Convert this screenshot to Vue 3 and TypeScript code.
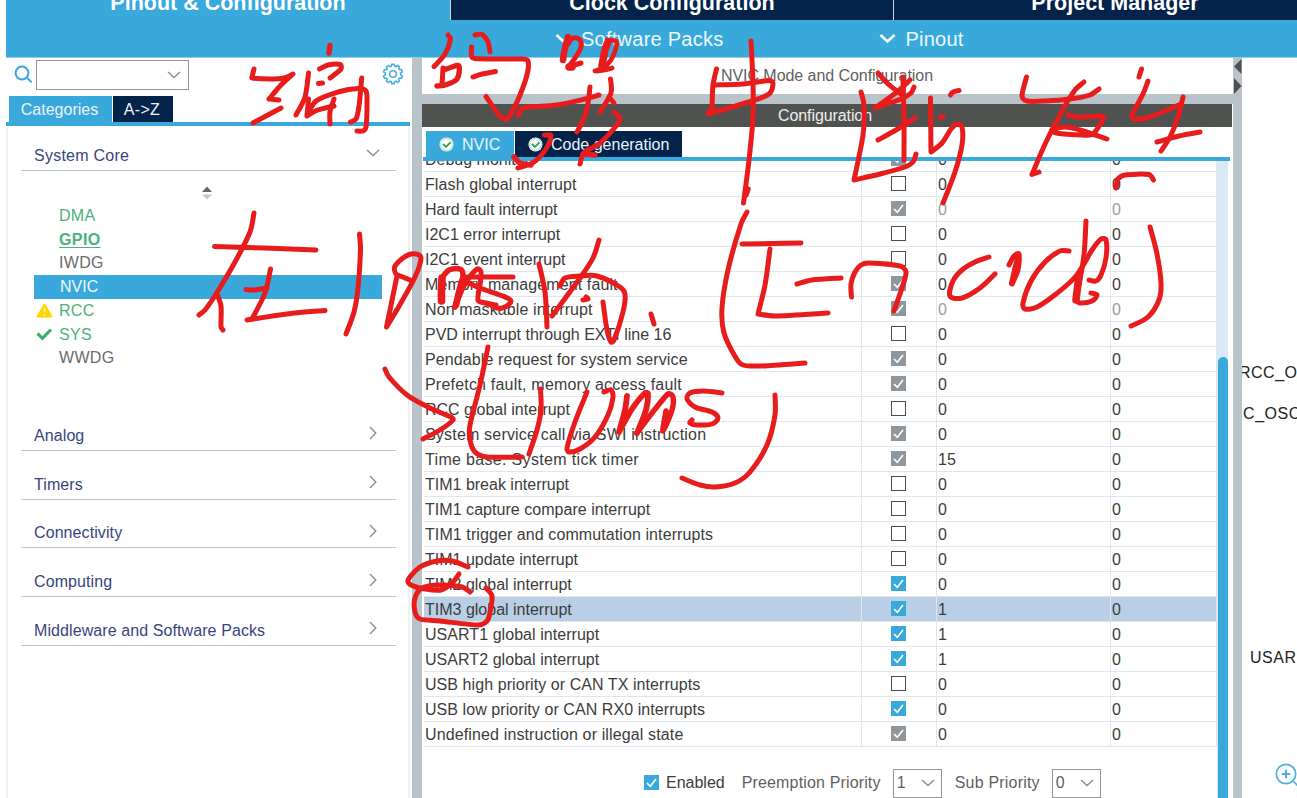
<script setup lang="ts">
type CheckState = 'off' | 'on' | 'locked'

interface Interrupt {
  name: string
  state: CheckState
  preempt: number
  sub: number
  spacing?: number
  dim?: boolean
  selected?: boolean
}

interface Peripheral {
  name: string
  kind: 'ok' | 'bold' | 'plain' | 'active'
  icon?: 'warn' | 'check'
}

interface Stroke {
  pts: string
  w?: number
}

const row = (name: string, state: CheckState, preempt = 0, extra: Partial<Interrupt> = {}): Interrupt => ({
  name,
  state,
  preempt,
  sub: 0,
  ...extra,
})

const interrupts: Interrupt[] = [
  row('Debug monitor', 'locked'),
  row('Flash global interrupt', 'off', 0, { spacing: 0.1 }),
  row('Hard fault interrupt', 'locked', 0, { dim: true }),
  row('I2C1 error interrupt', 'off'),
  row('I2C1 event interrupt', 'off'),
  row('Memory management fault', 'locked', 0, { spacing: 0.1 }),
  row('Non maskable interrupt', 'locked', 0, { dim: true, spacing: 0.1 }),
  row('PVD interrupt through EXTI line 16', 'off'),
  row('Pendable request for system service', 'locked', 0, { spacing: 0.11 }),
  row('Prefetch fault, memory access fault', 'locked', 0, { spacing: 0.2 }),
  row('RCC global interrupt', 'off'),
  row('System service call via SWI instruction', 'locked', 0, { spacing: 0.19 }),
  row('Time base: System tick timer', 'locked', 15, { spacing: 0.33 }),
  row('TIM1 break interrupt', 'off'),
  row('TIM1 capture compare interrupt', 'off', 0, { spacing: 0.04 }),
  row('TIM1 trigger and commutation interrupts', 'off', 0, { spacing: 0.09 }),
  row('TIM1 update interrupt', 'off'),
  row('TIM2 global interrupt', 'on'),
  row('TIM3 global interrupt', 'on', 1, { selected: true }),
  row('USART1 global interrupt', 'on', 1, { spacing: 0.05 }),
  row('USART2 global interrupt', 'on', 1, { spacing: 0.05 }),
  row('USB high priority or CAN TX interrupts', 'off', 0, { spacing: 0.07 }),
  row('USB low priority or CAN RX0 interrupts', 'on', 0, { spacing: 0.07 }),
  row('Undefined instruction or illegal state', 'locked', 0, { spacing: 0.13 }),
]

const peripherals: Peripheral[] = [
  { name: 'DMA', kind: 'ok' },
  { name: 'GPIO', kind: 'bold' },
  { name: 'IWDG', kind: 'plain' },
  { name: 'NVIC', kind: 'active' },
  { name: 'RCC', kind: 'ok', icon: 'warn' },
  { name: 'SYS', kind: 'ok', icon: 'check' },
  { name: 'WWDG', kind: 'plain' },
]

const categories: string[] = ['Analog', 'Timers', 'Connectivity', 'Computing', 'Middleware and Software Packs']

// Pen annotations; a repeated point makes a sharp corner.
const strokes: Stroke[] = [
  { pts: '254,69 252,77 252,78 270,79 284,78 293,74 293,74 281,85 269,99 269,99 279,100' },
  { pts: '281,108 266,116 253,123' },
  { pts: '308.5,73 305,97 296,115' },
  { pts: '330,45.5 329,53', w: 5.4 },
  { pts: '319.5,69 328,65 340,64.5 341,69 330,78' },
  { pts: '318.5,83.5 322.5,83' },
  { pts: '308.5,99 307,116 307,116 316,101 338,92 358,88.5 366,91 367,103 366,127 363,131 357,131' },
  { pts: '308,115 318,110 334,106' },
  { pts: '334,99 330,112 330,124' },
  { pts: '361.7,78 359,106 356,119 350.5,122' },
  { pts: '448,35 450.5,39 445,54 434,66.5' },
  { pts: '443,68 442,85' },
  { pts: '444,70 452,67 459,66 457,79 445,85 437,86', w: 5.4 },
  { pts: '475,35 482,34.5 488,42 490,52' },
  { pts: '471.5,47 471.5,56 475,58.5 500,59 523,59 528,61 527,75 517,102 508,118 504,119 498,114 486,96.5' },
  { pts: '473,77 482,74 495.5,71.5' },
  { pts: '518,115.5 523,108 557,105 585,99 599,95' },
  { pts: '590,87 588,103 584,118 577,132' },
  { pts: '568,37 565,48 563,60', w: 6.5 },
  { pts: '568,44 573,38 580,40 581,47 577,55 570,65' },
  { pts: '569,67 572,67', w: 7.5 },
  { pts: '571,66 581,63' },
  { pts: '608,42 605,50 602,66', w: 7.5 },
  { pts: '607,40 616,41 616,48 611,60 603,68 595,71 605,70 612,68', w: 4.8 },
  { pts: '610.5,79 611,93 600,112' },
  { pts: '609,97 614,103' },
  { pts: '614,112.5 620,118 616,126 600,143 584,153 580,164' },
  { pts: '583,154 595,155', w: 5.5 },
  { pts: '544.5,135 551,136 546,149 534,162 518,168' },
  { pts: '514,157 520,163 531,165', w: 5.6 },
  { pts: '751,41 753,83 753,117 749,160 743.5,203' },
  { pts: '748,189 746,195', w: 5.5 },
  { pts: '716.5,69 713,85 712,108' },
  { pts: '715,85 743,84 770,80.5 773,84 769,94 752,101 708,114 708,114 713,107' },
  { pts: '861,92 864,105 863,135 854,180 854,180 880,174 905,167 913,162 916,154' },
  { pts: '878,73 887,83 902,95' },
  { pts: '910,80 897,92 875,108 875,108 901,99 911,93 914,87' },
  { pts: '903,77 904,120 904,160' },
  { pts: '878,140 896,130 915,118' },
  { pts: '930.5,98 931,152 931,152 942,143 951,129 957,124 962,127 962,145 955,172 943,203' },
  { pts: '940.5,117 943,117' },
  { pts: '950.5,95 953,92 959,90.5' },
  { pts: '1026.5,77 1022,96 1027,101 1045,101 1070,99 1090,95 1099,89' },
  { pts: '1084,82 1075,90 1062,111 1046,142 1032,174.5 1032,174.5 1039,172' },
  { pts: '1068,115 1078,117 1103,116 1103,119 1093,134 1082,135 1056,133 1052,130 1065,127 1080,130 1107,139' },
  { pts: '1141.5,69 1139,77' },
  { pts: '1148,81 1143,94 1132,115 1134,119 1150,117 1181,104' },
  { pts: '1183,97 1178,117 1170,137 1161,151' },
  { pts: '1157,142 1179,136 1200,132' },
  { pts: '1116,188 1118,179 1125,175 1149,174.5 1153.5,180' },
  { pts: '254,213 250,232 235,262 216,294 205,310 199,315' },
  { pts: '214.5,246.5 265,248 316,250' },
  { pts: '217,294 221,306 221,327 223,330' },
  { pts: '270.5,269 265,293 252,319' },
  { pts: '246,289.5 254,290 267,288' },
  { pts: '247,320 287,314 325,310.5' },
  { pts: '359.5,234 360.5,250 358,288 354,312 346,334' },
  { pts: '397,276 386.5,327 386.5,327 398,308 415,277 421,258 416,254 406,256 395,266 396,274 403,277 410,280' },
  { pts: '442,278 441.5,290 441.5,301', w: 7.6 },
  { pts: '442,278 449,270 460,269 463,275 460,290 455,307', w: 5.5 },
  { pts: '462,281 459,292 456,305', w: 6.6 },
  { pts: '455,307 465,284 477,269 481,272 480,284 478,300 485,303 496,305' },
  { pts: '466,277 513,277' },
  { pts: '465,281 480,288 503,296 511,301 505,307 497,308 487,303' },
  { pts: '539,264 545,292 547,327' },
  { pts: '599,240 593,258 580,278 552,316' },
  { pts: '560,286 565,278 580,276 597,276 620,287 625,294 623,312 614,340 611,342 607,330 603,302' },
  { pts: '586,297 588,299 583,300' },
  { pts: '651,314 654,324' },
  { pts: '747,212 741,224 728,270 722,308 724,333 736,358 743,365 760,366 805,363' },
  { pts: '742,244 801,243' },
  { pts: '770,249 765,285 758,314 758,314 775,316 828,313' },
  { pts: '797,284 812,280 841,278' },
  { pts: '851.5,297 851,284 855,272 861,265 869,263 900,266 906,272 903,285 894,311' },
  { pts: '989,257 975,262 962,270 953,281 950,296 962,298 980,288 995,274' },
  { pts: '1009,265 1014,256 1019,254 1018,270 1012,284' },
  { pts: '1018,258 1015,270 1012,283', w: 6 },
  { pts: '1069,251 1060,251 1045,262 1031,281 1023,303 1025,309 1037,307 1056,294 1076,276 1092,250 1101,239 1106,240 1106,258 1101,275 1096,281 1089,280' },
  { pts: '1086,221 1084,255 1079,285' },
  { pts: '1079,275 1076,300', w: 7.5 },
  { pts: '1076,300 1080,303 1092,301 1097,295 1091,293' },
  { pts: '1150,227 1157,254 1161,283 1159,300 1148,317 1131,326' },
  { pts: '385,369 389,377 407,395 430,408 451,417 453,420 440,430 423,439' },
  { pts: '488,347 480,385 470,425 470,440 475,452 487,457 522,457' },
  { pts: '540.5,389 541,410 537,430 529,454' },
  { pts: '587,392 575,422 567,448 569,452 580,449 595,437 608,415 613,397 611,390 604,392' },
  { pts: '627,396 625,410 619,432 619,432 632,409 645,393 648,394 646,410 637,433', w: 5.8 },
  { pts: '637,433 652,413 668,394 673,397 672,410 663,431 666,411', w: 5.4 },
  { pts: '722,393 703,391 690,393 687,399 695,407 712,412 718,418 712,424 697,425 690,423 692,420' },
  { pts: '775,395 775,415 767,445 750,472 735,483 715,487 700,485 682,478' },
  { pts: '468,567 452,561 437,561 420,567 408,580 411,585 425,589 441,590 452,583 459,574' },
  { pts: '470,592 462,587 440,585 422,588 415,598 415,612 420,619 440,621 478,625 487,621 490,612 492,596 486,588' },
]

// Catmull-Rom spline through the points, written as cubic segments.
function smooth(pts: string): string {
  const p = pts.split(' ').map((s) => s.split(',').map(Number))
  const at = (i: number) => p[Math.max(0, Math.min(p.length - 1, i))]
  let d = `M${p[0][0]} ${p[0][1]}`
  for (let i = 0; i < p.length - 1; i++) {
    const [a, b, c, e] = [at(i - 1), at(i), at(i + 1), at(i + 2)]
    const seg = Math.hypot(c[0] - b[0], c[1] - b[1])
    const limit = (x: number, y: number) => {
      const l = Math.hypot(x, y)
      const k = l > seg / 3 ? seg / 3 / l : 1
      return [x * k, y * k]
    }
    const u = limit((c[0] - a[0]) / 6, (c[1] - a[1]) / 6)
    const v = limit((e[0] - b[0]) / 6, (e[1] - b[1]) / 6)
    d += `C${b[0] + u[0]} ${b[1] + u[1]} ${c[0] - v[0]} ${c[1] - v[1]} ${c[0]} ${c[1]}`
  }
  return d
}
</script>

<template>
  <div class="app">
    <header class="main-tabs">
      <div class="main-tab current">Pinout &amp; Configuration</div>
      <div class="main-tab">Clock Configuration</div>
      <div class="main-tab">Project Manager</div>
    </header>
    <nav class="menu">
      <div class="menu-item packs">
        <svg width="17" height="11" viewBox="0 0 17 11"><path d="M1.5 2 8.5 8.5 15.5 2" /></svg>
        <span>Software Packs</span>
      </div>
      <div class="menu-item">
        <svg width="17" height="11" viewBox="0 0 17 11"><path d="M1.5 2 8.5 8.5 15.5 2" /></svg>
        <span>Pinout</span>
      </div>
    </nav>

    <div class="body">
      <aside class="sidebar">
        <div class="search">
          <svg class="lens" width="19" height="19" viewBox="0 0 19 19">
            <circle cx="8" cy="8" r="6.4" /><path d="M12.8 12.8 17.6 17.2" />
          </svg>
          <div class="combo">
            <svg class="chev" width="14" height="8" viewBox="0 0 14 8"><path d="M1 1 7 6.6 13 1" /></svg>
          </div>
          <svg class="gear" width="22" height="22" viewBox="0 0 22 22">
            <circle cx="11" cy="11" r="3.3" />
            <path
              d="M9.3 3.3 9.8 1.4h2.4l.5 1.9 1.3.4 1.5-1.4 2 1.4-.7 1.9.8 1 2-.1.8 2.3-1.7 1.1v1.9l1.7 1.2-.8 2.2-2-.1-.9 1.1.7 1.9-2 1.4-1.5-1.3-1.3.4-.5 2H9.8l-.5-2-1.3-.4-1.5 1.3-2-1.4.7-1.9-.8-1.1-2 .1-.8-2.2 1.7-1.2V10L1.6 8.9l.8-2.3 2 .1.8-1-.7-1.9 2-1.4L8 3.7z"
            />
          </svg>
        </div>
        <div class="side-tabs">
          <div class="side-tab on">Categories</div>
          <div class="side-tab">A-&gt;Z</div>
        </div>
        <div class="tree">
          <div class="category open">
            <span>System Core</span>
            <svg class="chev" width="14" height="8" viewBox="0 0 14 8"><path d="M1 1 7 6.6 13 1" /></svg>
          </div>
          <svg class="sorter" width="10" height="14" viewBox="0 0 10 14">
            <path d="M0 6 5 .5 10 6z" fill="#666" /><path d="M0 8.5H10L5 13.5z" fill="#c9c9c9" />
          </svg>
          <ul class="peripherals">
            <li v-for="p in peripherals" :key="p.name" :class="p.kind">
              <span class="mark">
                <svg v-if="p.icon === 'warn'" width="17" height="15" viewBox="0 0 17 15">
                  <path d="M8.5 1.5 15.5 13.5H1.5z" fill="#ffd400" stroke="#ffd400" stroke-width="1.8" stroke-linejoin="round" />
                  <path d="M8.5 5v4.5M8.5 11v1.7" stroke="#fff3b0" stroke-width="1.5" />
                </svg>
                <svg v-else-if="p.icon === 'check'" width="17" height="13" viewBox="0 0 17 13">
                  <path d="M1.5 5.5 6.5 10.3 15 1.5" fill="none" stroke="#3fae6b" stroke-width="3.2" />
                </svg>
              </span>
              <span>{{ p.name }}</span>
            </li>
          </ul>
          <div v-for="c in categories" :key="c" class="category">
            <span>{{ c }}</span>
            <svg class="chev" width="8" height="14" viewBox="0 0 8 14"><path d="M1 1 6.8 7 1 13" /></svg>
          </div>
        </div>
      </aside>

      <main class="center">
        <div class="mode-title">NVIC Mode and Configuration</div>
        <div class="config-title">Configuration</div>
        <div class="nvic-tabs">
          <div class="nvic-tab on">
            <svg width="15" height="15" viewBox="0 0 15 15">
              <circle cx="7.5" cy="7.5" r="7" fill="#fff" /><circle cx="7.5" cy="7.5" r="5.8" fill="none" stroke="#a6d9b8" />
              <path d="M4 7 7 9.9 11.5 5.3" fill="none" stroke="#3a9d60" stroke-width="1.9" />
            </svg>
            <span>NVIC</span>
          </div>
          <div class="nvic-tab code">
            <svg width="15" height="15" viewBox="0 0 15 15">
              <circle cx="7.5" cy="7.5" r="7" fill="#fff" /><circle cx="7.5" cy="7.5" r="5.8" fill="none" stroke="#a6d9b8" />
              <path d="M4 7 7 9.9 11.5 5.3" fill="none" stroke="#3a9d60" stroke-width="1.9" />
            </svg>
            <span>Code generation</span>
          </div>
        </div>
        <div class="scroller">
          <div class="table">
            <div v-for="r in interrupts" :key="r.name" class="row" :class="{ selected: r.selected, dim: r.dim }">
              <div class="cell name" :style="{ letterSpacing: `${r.spacing ?? 0}px` }">{{ r.name }}</div>
              <div class="cell tick">
                <span class="box" :class="r.state">
                  <svg v-if="r.state !== 'off'" width="15" height="15" viewBox="0 0 15 15"><path d="M3 8 6.3 11.2 12 4" /></svg>
                </span>
              </div>
              <div class="cell num">{{ r.preempt }}</div>
              <div class="cell num last">{{ r.sub }}</div>
            </div>
          </div>
          <div class="track"><div class="thumb"></div></div>
        </div>
        <div class="editor">
          <span class="box on"><svg width="15" height="15" viewBox="0 0 15 15"><path d="M3 8 6.3 11.2 12 4" /></svg></span>
          <span class="enabled">Enabled</span>
          <span class="label pre">Preemption Priority</span>
          <div class="select">1<svg class="chev" width="14" height="8" viewBox="0 0 14 8"><path d="M1 1 7 6.6 13 1" /></svg></div>
          <span class="label sub">Sub Priority</span>
          <div class="select">0<svg class="chev" width="14" height="8" viewBox="0 0 14 8"><path d="M1 1 7 6.6 13 1" /></svg></div>
        </div>
      </main>

      <div class="divider">
        <svg width="9" height="38" viewBox="0 0 9 38">
          <path d="M8.5 1V16L1 8.5zM1 20V36L8.5 28z" fill="#4d4f51" />
        </svg>
      </div>

      <section class="pins">
        <div class="pin osc-in">RCC_OSC_IN</div>
        <div class="pin osc-out">RCC_OSC_OUT</div>
        <div class="pin usart">USAR</div>
        <svg class="zoom-in" width="26" height="26" viewBox="0 0 26 26">
          <circle cx="11" cy="11" r="9.7" /><path d="M18 18 25 25" /><path d="M11 6.8v8.4M6.8 11h8.4" stroke-width="2" />
        </svg>
      </section>
    </div>

    <svg class="ink" width="1297" height="798" viewBox="0 0 1297 798">
      <path v-for="(s, i) in strokes" :key="i" :d="smooth(s.pts)" :stroke-width="s.w ?? 5" />
    </svg>
  </div>
</template>

<style>
html,
body {
  overflow: hidden;
}
</style>

<style scoped>
.app {
  position: relative;
  box-sizing: border-box;
  width: 1297px;
  height: 798px;
  padding-left: 6px;
  overflow: hidden;
  background: #fff;
  color: #3c3c3c;
  font: 16px/1 "Liberation Sans", Arial, sans-serif;
}
.app * {
  box-sizing: border-box;
}
span,
.cell,
.main-tab,
.side-tab {
  white-space: nowrap;
}
.main-tabs {
  display: flex;
  height: 20px;
}
.main-tab {
  flex: none;
  width: 443px;
  height: 20px;
  border-left: 1px solid #cfd8e2;
  background: #03234b;
  color: #fff;
  font-size: 21.5px;
  font-weight: bold;
  line-height: 24px;
  text-align: center;
}
.main-tab::before {
  content: "";
  display: block;
  margin-top: -9px;
}
.main-tab.current {
  width: 444px;
  border: 0;
  background: #39a9dc;
}
.menu {
  display: flex;
  gap: 156px;
  height: 38px;
  padding-left: 549px;
  background: #39a9dc;
  border-bottom: 1px solid #8fcdea;
  color: #eef8fd;
}
.menu-item {
  display: flex;
  align-items: center;
  gap: 9px;
  font-size: 20px;
  letter-spacing: 0.25px;
}
.menu-item path {
  fill: none;
  stroke: #fff;
  stroke-width: 2.6;
}
.body {
  display: flex;
  height: 740px;
}
.sidebar {
  display: flex;
  flex-direction: column;
  width: 406px;
  padding-right: 2px;
  flex: none;
}
.chev path {
  fill: none;
  stroke: #8d8d8d;
  stroke-width: 1.4;
}
.search {
  display: flex;
  align-items: flex-start;
  height: 38px;
  padding: 2px 0 0 8px;
}
.lens {
  flex: none;
  margin-top: 5px;
  fill: none;
  stroke: #39a9dc;
  stroke-width: 2;
}
.combo {
  display: flex;
  flex: none;
  align-items: center;
  justify-content: flex-end;
  width: 153px;
  height: 30px;
  margin-left: 3px;
  padding-right: 7px;
  border: 1px solid #8e979d;
}
.gear {
  flex: none;
  margin: 3px 0 0 193px;
  fill: none;
  stroke: #4db1df;
  stroke-width: 1.6;
}
.side-tabs {
  display: flex;
  gap: 1px;
  height: 30px;
  padding-left: 3px;
  border-bottom: 4px solid #39a9dc;
}
.side-tab {
  height: 26px;
  width: 60px;
  padding-right: 2px;
  background: #03234b;
  color: #eef3f8;
  line-height: 27px;
  text-align: center;
  letter-spacing: 0.3px;
}
.side-tab.on {
  width: 103px;
  letter-spacing: 0;
  background: #39a9dc;
}
.tree {
  flex: 1;
  border: solid #f0f1f2;
  border-width: 0 2px;
  padding: 10px 12px 0 13px;
}
.category {
  display: flex;
  align-items: center;
  justify-content: space-between;
  height: 48.75px;
  padding: 20px 19px 0 13px;
  border-bottom: 1px solid #b8c6ce;
  color: #38447e;
  letter-spacing: 0.09px;
}
.category .chev {
  margin-top: -5px;
}
.category.open {
  height: 35px;
  padding: 7px 16px 2px 13px;
  letter-spacing: 0.25px;
}
.category.open .chev {
  margin-top: -6px;
}
.sorter {
  display: block;
  margin: 15px auto 0 181px;
}
.peripherals {
  height: 198px;
  margin: 4px 0 0;
  padding: 0;
  list-style: none;
}
.peripherals li {
  display: flex;
  align-items: center;
  width: 348px;
  height: 23.75px;
  margin-left: 13px;
  color: #6a6a6c;
  letter-spacing: 0.3px;
}
.peripherals .mark {
  display: flex;
  width: 25px;
  padding-left: 2px;
}
.peripherals .ok,
.peripherals .bold {
  color: #4cb27a;
}
.peripherals .bold span:last-child {
  font-weight: bold;
  letter-spacing: 0.4px;
  text-decoration: underline;
  text-underline-offset: 2px;
}
.peripherals .active {
  background: #39a9dc;
  color: #eef8fd;
  letter-spacing: 0;
}
.peripherals .active .mark {
  width: 26px;
}
.center {
  display: flex;
  flex-direction: column;
  flex: none;
  width: 821px;
  border-left: 10px solid #b8c4ca;
}
.mode-title {
  height: 46px;
  padding-right: 1px;
  border-bottom: 10px solid #b8c4ca;
  line-height: 36px;
  text-align: center;
  color: #5f5f61;
  letter-spacing: -0.05px;
}
.config-title {
  width: 810px;
  height: 23px;
  background: #50524f;
  color: #eee;
  line-height: 23px;
  text-align: center;
  padding-right: 4px;
  letter-spacing: -0.1px;
}
.nvic-tabs {
  display: flex;
  gap: 1px;
  height: 34px;
  width: 807px;
  margin-left: 1px;
  padding: 4px 0 0 3px;
  border-bottom: 4px solid #39a9dc;
}
.nvic-tab {
  display: flex;
  align-items: center;
  gap: 8px;
  width: 88px;
  height: 26px;
  padding: 1px 0 0 13px;
  background: #39a9dc;
  color: #e6f5fc;
}
.nvic-tab.code {
  width: 167px;
  background: #03234b;
}
.scroller {
  display: flex;
  height: 637px;
  flex: none;
  margin-bottom: -51px;
}
.table {
  width: 795px;
  height: 587px;
  padding-left: 2px;
  overflow: hidden;
}
.row {
  display: flex;
  height: 25px;
  border-bottom: 1px solid #e2e5e9;
}
.row:first-child {
  margin-top: -14px;
}
.row.selected {
  background: #b8cfe5;
}
.cell {
  display: flex;
  align-items: center;
  padding: 1px 0 0 1px;
  border-right: 1px solid #e2e5e9;
}
.cell.name {
  width: 438px;
}
.cell.tick {
  width: 75px;
  justify-content: center;
  padding: 0 2px 1px 0;
}
.cell.num {
  width: 174px;
}
.cell.num.last {
  width: 106px;
}
.dim .num {
  color: #999ca3;
}
.box {
  display: block;
  flex: none;
  width: 15px;
  height: 15px;
}
.box.off {
  border: 1px solid #4c4c4c;
  background: #fff;
}
.box.on {
  background: #39a9dc;
}
.box.locked {
  background: #8f979d;
}
.box svg {
  display: block;
}
.box path {
  fill: none;
  stroke: #fff;
  stroke-width: 1.6;
}
.track {
  width: 11px;
  background: #d9e9f5;
}
.thumb {
  height: 441px;
  margin: 196px 0 0 1px;
  border-radius: 5px 5px 0 0;
  background: #39a9dc;
}
.editor {
  display: flex;
  align-items: center;
  height: 30px;
  flex: none;
  margin-top: 21px;
  padding-left: 222px;
}
.editor .box {
  margin-top: -1px;
}
.enabled {
  margin-left: 7px;
}
.label {
  color: #5f5f61;
}
.label.pre {
  width: 139px;
  margin: 0 12px 0 17px;
  letter-spacing: 0.15px;
}
.label.sub {
  width: 85px;
  margin: 0 12px 0 13px;
  letter-spacing: 0.2px;
}
.select {
  display: flex;
  align-items: center;
  justify-content: space-between;
  width: 49px;
  height: 29px;
  padding: 0 6px 0 3px;
  border: 1px solid #8e979d;
  color: #5f5f61;
}
.divider {
  flex: none;
  width: 9px;
  background: #b8c4ca;
}
.pins {
  position: relative;
  flex: 1;
  overflow: hidden;
  color: #222;
}
.pin {
  position: absolute;
  white-space: nowrap;
  letter-spacing: 0.5px;
}
.osc-in {
  left: -3px;
  top: 307px;
}
.osc-out {
  left: -23px;
  top: 348px;
}
.usart {
  left: 8px;
  top: 592px;
}
.zoom-in {
  position: absolute;
  left: 33px;
  top: 705px;
  fill: none;
  stroke: #4db1df;
  stroke-width: 1.7;
}
.ink {
  position: absolute;
  inset: 0;
}
.ink path {
  fill: none;
  stroke: #e81c1c;
  stroke-linecap: round;
  stroke-linejoin: round;
}
</style>
